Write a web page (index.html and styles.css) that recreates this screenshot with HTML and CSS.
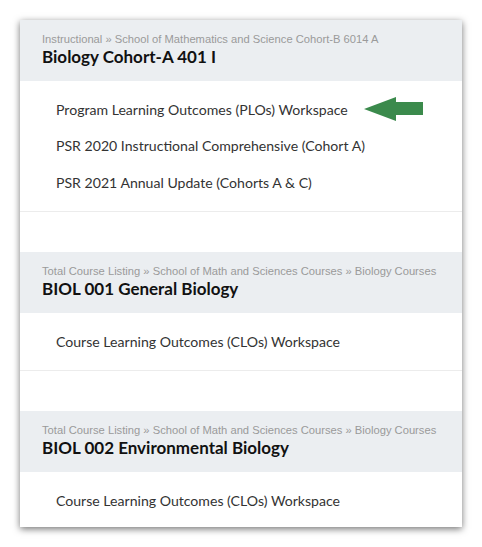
FILE: index.html
```html
<!DOCTYPE html>
<html>
<head>
<meta charset="utf-8">
<link rel="stylesheet" href="styles.css">
</head>
<body>
<div class="card">
  <section class="group">
    <div class="head">
      <div class="crumbs">Instructional » School of Mathematics and Science Cohort-B 6014 A</div>
      <div class="title">Biology Cohort-A 401 I</div>
    </div>
    <ul class="list">
      <li class="item">
        <span>Program Learning Outcomes (PLOs) Workspace</span>
        <svg class="arrow" width="60" height="24" viewBox="0 0 60 24"><path d="M0 12 L32 0 L32 5 L59 5 L59 18 L32 18 L32 24 Z" fill="#3b8a4c"/></svg>
      </li>
      <li class="item"><span>PSR 2020 Instructional Comprehensive (Cohort A)</span></li>
      <li class="item"><span>PSR 2021 Annual Update (Cohorts A &amp; C)</span></li>
    </ul>
  </section>
  <section class="group">
    <div class="head">
      <div class="crumbs">Total Course Listing » School of Math and Sciences Courses » Biology Courses</div>
      <div class="title">BIOL 001 General Biology</div>
    </div>
    <ul class="list">
      <li class="item"><span>Course Learning Outcomes (CLOs) Workspace</span></li>
    </ul>
  </section>
  <section class="group last">
    <div class="head">
      <div class="crumbs">Total Course Listing » School of Math and Sciences Courses » Biology Courses</div>
      <div class="title">BIOL 002 Environmental Biology</div>
    </div>
    <ul class="list">
      <li class="item"><span>Course Learning Outcomes (CLOs) Workspace</span></li>
    </ul>
  </section>
</div>
</body>
</html>
```
FILE: styles.css
```css
html, body {
  margin: 0;
  padding: 0;
  background: #ffffff;
}
body {
  padding: 20px 20px 0 20px;
  width: 442px;
  height: 527px;
  box-sizing: content-box;
}
.card {
  width: 442px;
  height: 507px;
  background: #fff;
  box-shadow: 0 2px 7px rgba(0,0,0,0.55);
  overflow: hidden;
  display: flex;
  flex-direction: column;
}
.group {
  margin-bottom: 40px;
}
.group.last {
  margin-bottom: 0;
}
.head {
  background: #ebeef1;
  height: 61px;
  box-sizing: border-box;
  padding: 12px 22px 0 22px;
}
.crumbs {
  font-family: "Liberation Sans", Arial, sans-serif;
  font-size: 11.2px;
  color: #9a9a9a;
  line-height: 14px;
}
.title {
  font-family: Lato, "Open Sans", sans-serif;
  font-weight: 700;
  font-size: 17px;
  color: #111;
  line-height: 21px;
}
.list {
  list-style: none;
  margin: 0;
  padding: 10px 0 10.5px 0;
  border-bottom: 1px solid #ececec;
}
.group.last .list {
  border-bottom: none;
  padding-bottom: 0;
}
.item {
  height: 36.5px;
  display: flex;
  align-items: center;
  padding-left: 36px;
  font-family: Lato, "Open Sans", sans-serif;
  font-size: 14.1px;
  color: #333;
}
.arrow {
  margin-left: 16px;
}
```
